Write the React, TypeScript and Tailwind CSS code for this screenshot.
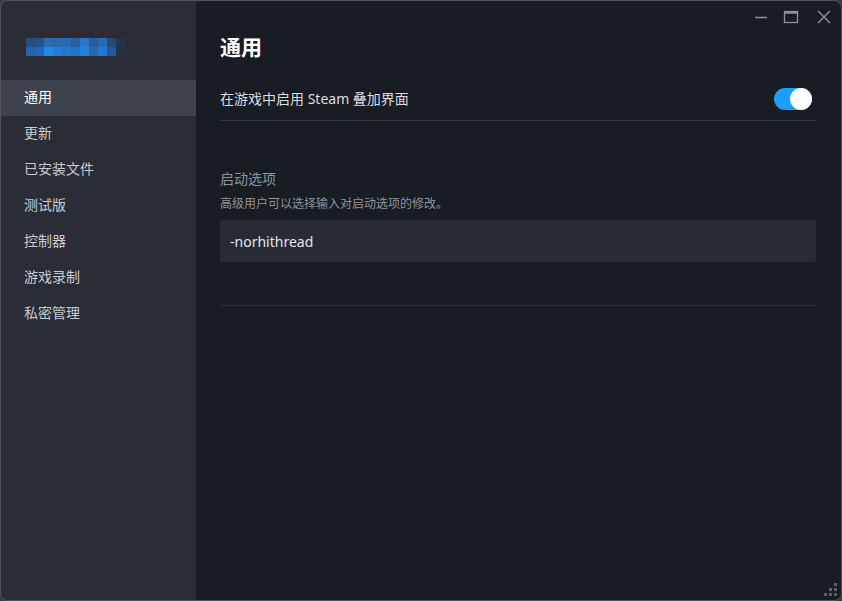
const menu = ['通用', '更新', '已安装文件', '测试版', '控制器', '游戏录制', '私密管理']

const row1 = ['#254f7e', '#26538a', '#2a6cb7', '#2a69b0', '#2b6bb5', '#2a5e9e', '#2a77c9', '#2a5c99', '#2a6aae', '#264b73', '#22354a']
const row2 = ['#2462ad', '#2466b5', '#2389e6', '#237ed7', '#2378cd', '#2570c0', '#2382d9', '#246aad', '#2377d0', '#24589a', '#263140']

function Logo() {
  return (
    <div className="flex flex-col">
      <div className="flex pl-[25px]">
        {row1.map((c, i) => (
          <div key={i} className="w-[9px] h-[9px]" style={{ background: c }} />
        ))}
      </div>
      <div className="flex pl-[16px]">
        <div className="w-[9px] h-[9px] bg-[#262d38]" />
        {row2.map((c, i) => (
          <div key={i} className="w-[9px] h-[9px]" style={{ background: c }} />
        ))}
      </div>
    </div>
  )
}

function WindowControls() {
  return (
    <div className="absolute top-0 right-0 flex items-center text-[#8a929b]">
      <svg width="32" height="32" viewBox="0 0 32 32" className="-mr-[2px]">
        <path d="M10 16.5h12" stroke="currentColor" strokeWidth="1.5" />
      </svg>
      <svg width="32" height="32" viewBox="0 0 32 32" className="mr-[1px]">
        <rect x="9.5" y="10.5" width="13" height="11" fill="none" stroke="currentColor" strokeWidth="1.3" />
        <path d="M9.5 11.6h13" stroke="currentColor" strokeWidth="2.2" />
      </svg>
      <svg width="32" height="32" viewBox="0 0 32 32" className="mr-[1px]">
        <path d="M10 10l12 12M22 10l-12 12" stroke="currentColor" strokeWidth="1.4" />
      </svg>
    </div>
  )
}

export default function App() {
  return (
    <div
      className="w-[842px] h-[601px] bg-[#3a3c40]"
      style={{ fontFamily: '"Noto Sans", "Noto Sans CJK SC", sans-serif' }}
    >
      <div className="w-full h-full flex rounded-[8px] overflow-hidden border border-[#50535a]">
        {/* Sidebar */}
        <aside className="w-[195px] bg-[#2a2d35] flex flex-col">
          <div className="h-[79px] pt-[37px]">
            <Logo />
          </div>
          <nav className="flex flex-col">
            {menu.map((item, i) => (
              <div
                key={item}
                className={`h-[36px] flex items-center pl-[23px] pb-[3px] text-[14px] ${
                  i === 0 ? 'bg-[#3d424d] text-white' : 'text-[#c9ccd1]'
                }`}
              >
                {item}
              </div>
            ))}
          </nav>
        </aside>

        {/* Main */}
        <main className="flex-1 bg-[#181c23] relative flex flex-col pl-[24px] pr-[25px]">
          <WindowControls />

          <h1 className="mt-[31px] text-[21px] leading-[30px] font-bold text-white">通用</h1>

          <div className="mt-[15px] h-[44px] flex items-center justify-between border-b border-[#2f343d]">
            <span className="text-[14px] text-[#dcdee1]">在游戏中启用 Steam 叠加界面</span>
            <div className="w-[38px] h-[22px] rounded-full bg-[#1a9fff] relative mr-[4px]">
              <div className="absolute right-0 top-0 w-[22px] h-[22px] rounded-full bg-white" />
            </div>
          </div>

          <div className="pt-[48px] pb-[43px] border-b border-[#2a2f38]">
            <div className="text-[14px] leading-[20px] text-[#8d949c]">启动选项</div>
            <div className="mt-[6px] text-[12px] leading-[18px] text-[#8d949c]">
              高级用户可以选择输入对启动选项的修改。
            </div>
            <div className="mt-[7px] h-[42px] rounded-[3px] bg-[#272b33] flex items-center px-[10px] text-[14px] text-[#e4e6e8]">
              -norhithread
            </div>
          </div>

          {/* resize grip */}
          <div className="absolute right-[4px] bottom-[4px] grid grid-cols-3 gap-[2px]">
            <div />
            <div />
            <div className="w-[3px] h-[3px] bg-[#5a606a]" />
            <div />
            <div className="w-[3px] h-[3px] bg-[#5a606a]" />
            <div className="w-[3px] h-[3px] bg-[#5a606a]" />
            <div className="w-[3px] h-[3px] bg-[#5a606a]" />
            <div className="w-[3px] h-[3px] bg-[#5a606a]" />
            <div className="w-[3px] h-[3px] bg-[#5a606a]" />
          </div>
        </main>
      </div>
    </div>
  )
}
